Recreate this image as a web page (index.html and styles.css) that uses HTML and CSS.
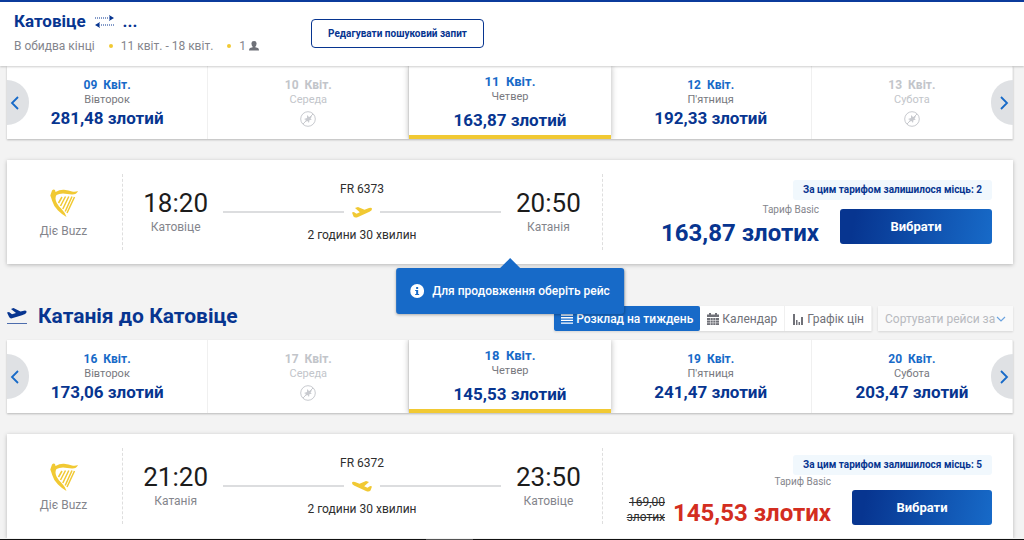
FILE: index.html
```html
<!DOCTYPE html>
<html lang="uk">
<head>
<meta charset="utf-8">
<meta name="viewport" content="width=device-width, initial-scale=1">
<title>Катовіце – Катанія</title>
<link rel="stylesheet" href="styles.css">
</head>
<body>
<svg class="sprite" aria-hidden="true">
  <symbol id="harp" viewBox="0 0 28 28">
    <path d="M2 1.500Q3.500 0 5 1L5.500 3Q10 .500 14 .800Q19 1.500 22 2.400Q25 3 28 2Q26.500 5.600 22 5.500Q17 5 13 4.500Q9 4.500 6.500 6Q4.500 9 6.500 13.500Q8.500 17.500 12 20.500Q15 23.500 16.500 28Q12 25.500 8 21.500Q3.500 17 2.200 12Q1.300 9 .300 6.500Z"/>
    <path d="M12 8L8.500 14M15.500 7.500L10.500 17M18.800 7.500L12.800 20M22 7.500L15.200 22.500M24.500 8L17 24" fill="none" stroke="currentColor" stroke-width="1.500"/>
  </symbol>
  <symbol id="plane" viewBox="0 0 20 11">
    <path d="M3 1L6 0L12.500 2.800L17 1Q20 .300 20 2Q20 3.600 17.500 4.700L6 10Q3 11.300 1.500 9.500L0 5.500L1.800 5L4.500 6.700L7.800 5.300Z"/>
  </symbol>
  <symbol id="noflight" viewBox="0 0 16 16">
    <circle cx="8" cy="8" r="7.300" fill="none" stroke="currentColor"/>
    <path d="M3 13L13 3" stroke="currentColor" stroke-width="1"/>
    <path d="M4 8L7 7L7 4L9 6L12 5L10.500 8L12 9L9.500 9L9 12L7.500 10L4.500 11L6 9Z"/>
  </symbol>
  <symbol id="prev" viewBox="0 0 10 16"><path d="M8 2L2 8L8 14" fill="none" stroke="currentColor" stroke-width="1.800"/></symbol>
  <symbol id="next" viewBox="0 0 10 16"><path d="M2 2L8 8L2 14" fill="none" stroke="currentColor" stroke-width="1.800"/></symbol>
</svg>

<header class="header">
  <div class="trip">
    <h1 class="trip-title">Катовіце
      <svg class="swap" viewBox="0 0 21 14" aria-hidden="true"><path d="M1 4H16M5 11H20" fill="none" stroke="currentColor" stroke-dasharray="1 1"/><path d="M15 1L20 4L15 7L16 4ZM6 8L1 11L6 14L5 11Z"/></svg>
      <span>...</span></h1>
    <p class="trip-info"><span>В обидва кінці</span><i class="dot"></i><span>11 квіт. - 18 квіт.</span><i class="dot"></i><span>1</span>
      <svg class="person" viewBox="0 0 10 10" aria-hidden="true"><path d="M5 0Q8 0 7.500 3Q7.300 5 6.300 5.700V6.300L9 7Q10 7.500 10 9.500H0Q0 7.500 1 7L3.700 6.300V5.700Q2.700 5 2.500 3Q2 0 5 0Z"/></svg></p>
  </div>
  <button class="edit" type="button">Редагувати пошуковий запит</button>
</header>

<main class="page">
  <section class="journey">
    <div class="days">
      <button class="day" type="button"><span class="date">09&nbsp; Квіт.</span><span class="weekday">Вівторок</span><span class="price">281,48 злотий</span></button>
      <button class="day off" type="button" disabled><span class="date">10&nbsp; Квіт.</span><span class="weekday">Середа</span><svg class="noflight"><use href="#noflight"/></svg></button>
      <button class="day selected" type="button"><span class="date">11&nbsp; Квіт.</span><span class="weekday">Четвер</span><span class="price">163,87 злотий</span></button>
      <button class="day" type="button"><span class="date">12&nbsp; Квіт.</span><span class="weekday">П'ятниця</span><span class="price">192,33 злотий</span></button>
      <button class="day off" type="button" disabled><span class="date">13&nbsp; Квіт.</span><span class="weekday">Субота</span><svg class="noflight"><use href="#noflight"/></svg></button>
      <button class="nav nav-prev" type="button" aria-label="Назад"><svg><use href="#prev"/></svg></button>
      <button class="nav nav-next" type="button" aria-label="Далі"><svg><use href="#next"/></svg></button>
    </div>
    <article class="flight">
      <div class="carrier"><svg class="harp"><use href="#harp"/></svg><span>Діє Buzz</span></div>
      <div class="route">
        <div class="stop"><span class="time">18:20</span><span class="city">Катовіце</span></div>
        <div class="leg"><span>FR 6373</span><div class="track"><svg class="plane"><use href="#plane"/></svg></div><span>2 години 30 хвилин</span></div>
        <div class="stop"><span class="time">20:50</span><span class="city">Катанія</span></div>
      </div>
      <div class="offer">
        <span class="seats">За цим тарифом залишилося місць: 2</span>
        <div class="buy">
          <div class="fare"><span class="fare-name">Тариф Basic</span><span class="amount">163,87 злотих</span></div>
          <button class="choose" type="button">Вибрати</button>
        </div>
      </div>
      <div class="tooltip" role="status"><svg class="info" viewBox="0 0 14 14" aria-hidden="true"><circle cx="7" cy="7" r="7" fill="#fff"/><path d="M6 3H8V5H6ZM5 6H8V10H9V11H5V10H6V7H5Z"/></svg><span>Для продовження оберіть рейс</span></div>
    </article>
  </section>

  <section class="journey">
    <div class="heading">
      <h2 class="heading-title"><svg class="takeoff" viewBox="0 0 20 17" aria-hidden="true"><path d="M0 4.500L2 4L5 6.200L9 5L4 1L6.500 0L13.500 3.500L18 2.500Q20 2.500 19.500 4.200Q19 6 15 7.200L5 10.300Q3 10.800 2 8.800Z"/><path d="M0 15.500H20" stroke="currentColor" stroke-width="1" opacity=".7"/></svg>Катанія до Катовіце</h2>
      <div class="views">
        <button class="view active" type="button"><svg viewBox="0 0 12 10" aria-hidden="true"><path d="M0 1H12M0 3.700H12M0 6.400H12M0 9.100H12" stroke="currentColor" stroke-width="1.400"/></svg>Розклад на тиждень</button>
        <button class="view" type="button"><svg viewBox="0 0 12 12" aria-hidden="true"><path d="M2 0H4V1.500H8V0H10V1.500H12V4H0V1.500H2ZM0 5H12V12H0Z"/><path d="M0 7.500H12M0 9.800H12M3.500 5V12M6 5V12M8.500 5V12" stroke="#fff" stroke-width=".5"/></svg>Календар</button>
        <button class="view" type="button"><svg viewBox="0 0 10 12" aria-hidden="true"><path d="M0 1H2V12H0ZM3 7H4.500V12H3ZM5.500 9H7V12H5.500ZM8 4H10V12H8Z"/></svg>Графік цін</button>
      </div>
      <label class="sort"><select aria-label="Сортувати рейси за"><option>Сортувати рейси за</option></select><svg viewBox="0 0 10 6" aria-hidden="true"><path d="M1 1L5 5L9 1" fill="none" stroke="currentColor" stroke-width="1.200"/></svg></label>
    </div>
    <div class="days">
      <button class="day" type="button"><span class="date">16&nbsp; Квіт.</span><span class="weekday">Вівторок</span><span class="price">173,06 злотий</span></button>
      <button class="day off" type="button" disabled><span class="date">17&nbsp; Квіт.</span><span class="weekday">Середа</span><svg class="noflight"><use href="#noflight"/></svg></button>
      <button class="day selected" type="button"><span class="date">18&nbsp; Квіт.</span><span class="weekday">Четвер</span><span class="price">145,53 злотий</span></button>
      <button class="day" type="button"><span class="date">19&nbsp; Квіт.</span><span class="weekday">П'ятниця</span><span class="price">241,47 злотий</span></button>
      <button class="day" type="button"><span class="date">20&nbsp; Квіт.</span><span class="weekday">Субота</span><span class="price">203,47 злотий</span></button>
      <button class="nav nav-prev" type="button" aria-label="Назад"><svg><use href="#prev"/></svg></button>
      <button class="nav nav-next" type="button" aria-label="Далі"><svg><use href="#next"/></svg></button>
    </div>
    <article class="flight discounted">
      <div class="carrier"><svg class="harp"><use href="#harp"/></svg><span>Діє Buzz</span></div>
      <div class="route">
        <div class="stop"><span class="time">21:20</span><span class="city">Катанія</span></div>
        <div class="leg"><span>FR 6372</span><div class="track"><svg class="plane back"><use href="#plane"/></svg></div><span>2 години 30 хвилин</span></div>
        <div class="stop"><span class="time">23:50</span><span class="city">Катовіце</span></div>
      </div>
      <div class="offer">
        <span class="seats">За цим тарифом залишилося місць: 5</span>
        <div class="buy">
          <div class="fare"><span class="fare-name">Тариф Basic</span><div class="amounts"><s class="old">169,00 злотих</s><span class="amount">145,53 злотих</span></div></div>
          <button class="choose" type="button">Вибрати</button>
        </div>
      </div>
    </article>
  </section>
</main>
<div class="bottom-bar"><i class="bottom-handle"></i></div>
</body>
</html>
```

FILE: styles.css
```css
:root {
  --navy: #073590;
  --blue: #176ac8;
  --yellow: #f1c933;
  --grey: #84858c;
  --line: #dcdddf;
}

* { box-sizing: border-box; }

html { overflow: hidden; }

body {
  margin: 0;
  background: #f3f3f3;
  color: #2e2e2e;
  font-family: Roboto, "Liberation Sans", sans-serif;
  font-size: 12px;
}

h1, h2, p { margin: 0; }
button, select { font: inherit; color: inherit; cursor: pointer; }
svg { display: block; flex: none; fill: currentColor; }
.sprite { position: absolute; width: 0; height: 0; }

.header {
  position: relative;
  z-index: 2;
  display: flex;
  align-items: flex-start;
  padding: 7px 14px 11px;
  border-top: 2px solid #0b3b9c;
  background: #fff;
  box-shadow: 0 1px 2px rgba(0, 0, 0, .2);
}
.trip { width: 297px; }
.trip-title {
  display: flex;
  align-items: center;
  gap: 8px;
  color: var(--navy);
  font-size: 17px;
  font-weight: 700;
  line-height: 24px;
}
.swap { width: 21px; height: 14px; }
.trip-info {
  display: flex;
  align-items: center;
  padding-top: 4px;
  color: var(--grey);
  line-height: 18px;
}
.dot {
  width: 4px;
  height: 4px;
  margin: 0 8px 0 14px;
  border-radius: 50%;
  background: var(--yellow);
}
.person { width: 10px; height: 10px; margin-left: 3px; color: #6f7178; }
.edit {
  height: 29px;
  margin-top: 10px;
  padding: 0 16px;
  border: 1px solid var(--navy);
  border-radius: 4px;
  background: #fff;
  color: var(--navy);
  font-size: 10px;
  font-weight: 700;
}

.page { padding: 0 11px 0 7px; }

.days {
  position: relative;
  display: grid;
  grid-template-columns: repeat(5, 1fr);
  height: 73px;
  background: #fff;
  box-shadow: 0 1px 2px rgba(0, 0, 0, .25);
}
.day {
  display: flex;
  flex-direction: column;
  align-items: center;
  padding: 11px 0 0;
  border: 0;
  border-right: 1px solid #f0f0f0;
  background: none;
}
.date { color: var(--blue); font-weight: 700; line-height: 16px; }
.weekday { color: #77787e; font-size: 11px; line-height: 14px; }
.price { color: var(--navy); font-size: 17px; font-weight: 700; line-height: 22px; }
.off .date, .off .weekday { color: #c2c5ca; }
.noflight { width: 16px; height: 16px; margin-top: 4px; color: #c8cacf; }
.selected {
  padding-top: 8px;
  border-right: 0;
  border-bottom: 4px solid var(--yellow);
  background: #fff;
  box-shadow: 0 0 6px rgba(0, 0, 0, .3);
  clip-path: inset(0 -8px);
}
.selected .date { font-size: 13px; }
.selected .price { padding-top: 5px; }
.nav {
  position: absolute;
  top: 14px;
  display: flex;
  align-items: center;
  width: 22px;
  height: 45px;
  padding: 0;
  border: 0;
  background: #dfe1e4;
  color: var(--blue);
}
.nav svg { width: 10px; height: 16px; }
.nav-prev { left: 0; padding-left: 3px; border-radius: 0 23px 23px 0; }
.nav-next { right: 0; justify-content: flex-end; padding-right: 4px; border-radius: 23px 0 0 23px; }

.flight {
  position: relative;
  display: grid;
  grid-template-columns: 116px 480px 1fr;
  align-items: center;
  height: 104px;
  margin-top: 21px;
  background: #fff;
  box-shadow: 0 1px 4px rgba(0, 0, 0, .25);
}
.carrier, .route { height: 76px; border-right: 1px dashed #dedede; }
.carrier {
  display: flex;
  flex-direction: column;
  align-items: center;
  gap: 6px;
  padding: 15px 2px 0 0;
  color: var(--grey);
  line-height: 16px;
}
.harp { width: 28px; height: 28px; color: var(--yellow); }
.route { display: flex; align-items: center; justify-content: center; gap: 15px; padding-right: 1px; }
.stop { display: flex; flex-direction: column; align-items: center; }
.time { color: #1c1c1c; font-size: 26px; line-height: 31px; }
.city { color: var(--grey); line-height: 17px; }
.leg {
  display: flex;
  flex-direction: column;
  align-items: center;
  width: 278px;
  line-height: 16px;
}
.track { display: flex; align-items: center; gap: 8px; width: 100%; height: 30px; }
.track::before, .track::after { content: ""; flex: 1; height: 2px; background: var(--line); }
.plane { width: 20px; height: 11px; color: var(--yellow); }
.back { transform: scaleX(-1); }

.offer {
  display: flex;
  flex-direction: column;
  align-self: start;
  align-items: flex-end;
  gap: 3px;
  padding: 20px 21px 0 0;
}
.seats {
  padding: 0 10px;
  border-radius: 3px;
  background: #f1f8fd;
  color: var(--navy);
  font-size: 10px;
  font-weight: 700;
  line-height: 20px;
}
.buy { display: flex; align-items: center; gap: 21px; }
.fare { display: flex; flex-direction: column; align-items: flex-end; }
.fare-name { color: var(--grey); font-size: 10px; line-height: 14px; }
.amount { color: var(--navy); font-size: 24px; font-weight: 700; line-height: 32px; white-space: nowrap; }
.choose {
  width: 152px;
  height: 35px;
  border: 0;
  border-radius: 3px;
  background: linear-gradient(100deg, var(--navy) 10%, var(--blue));
  color: #fff;
  font-size: 13px;
  font-weight: 700;
}
.discounted .offer { gap: 0; padding-top: 21px; }
.discounted .buy { align-items: flex-start; }
.discounted .choose { width: 140px; margin-top: 15px; }
.discounted .amount { color: #d32d20; line-height: 36px; }
.amounts { display: flex; align-items: flex-start; gap: 8px; padding-top: 6px; }
.old { width: 40px; line-height: 15px; text-align: right; }

.tooltip {
  position: absolute;
  z-index: 3;
  top: calc(100% + 4px);
  left: 50%;
  display: flex;
  align-items: center;
  gap: 8px;
  height: 46px;
  padding: 0 14px;
  border-radius: 3px;
  background: var(--blue);
  box-shadow: 0 1px 3px rgba(0, 0, 0, .3);
  color: #fff;
  font-weight: 500;
  white-space: nowrap;
  transform: translateX(-50%);
}
.tooltip::before {
  content: "";
  position: absolute;
  bottom: 100%;
  left: 50%;
  margin-left: -10px;
  border: 10px solid transparent;
  border-top: 0;
  border-bottom-color: var(--blue);
}
.info { width: 14px; height: 14px; color: var(--blue); }

.heading { display: flex; align-items: flex-start; padding: 38px 0 9px; }
.heading-title {
  display: flex;
  align-items: center;
  gap: 11px;
  margin-right: auto;
  color: var(--navy);
  font-size: 21px;
  font-weight: 700;
  line-height: 28px;
}
.takeoff { width: 20px; height: 17px; }
.views { display: flex; margin-top: 4px; box-shadow: 0 1px 2px rgba(0, 0, 0, .12); }
.view {
  display: flex;
  align-items: center;
  gap: 3px;
  height: 25px;
  padding: 0 7px;
  border: 0;
  border-right: 1px solid #f0f0f0;
  background: #fff;
  color: #707178;
}
.view svg { width: 12px; height: 12px; }
.view.active { border: 0; border-radius: 2px; background: var(--blue); color: #fff; font-weight: 500; }
.sort {
  display: flex;
  align-items: center;
  width: 135px;
  height: 25px;
  margin: 4px 0 0 6px;
  padding: 0 7px;
  background: #f9f9f9;
  box-shadow: 0 1px 2px rgba(0, 0, 0, .12);
  color: #b8babf;
}
.sort select {
  flex: 1;
  min-width: 0;
  padding: 0;
  border: 0;
  background: none;
  appearance: none;
}
.sort svg { width: 10px; height: 6px; color: #6ba3df; }

.bottom-bar {
  position: fixed;
  z-index: 4;
  right: 0;
  bottom: 0;
  left: 0;
  display: flex;
  justify-content: center;
  height: 1px;
  background: #111;
}
.bottom-handle { width: 47px; margin-right: 126px; background: #555; }
```
